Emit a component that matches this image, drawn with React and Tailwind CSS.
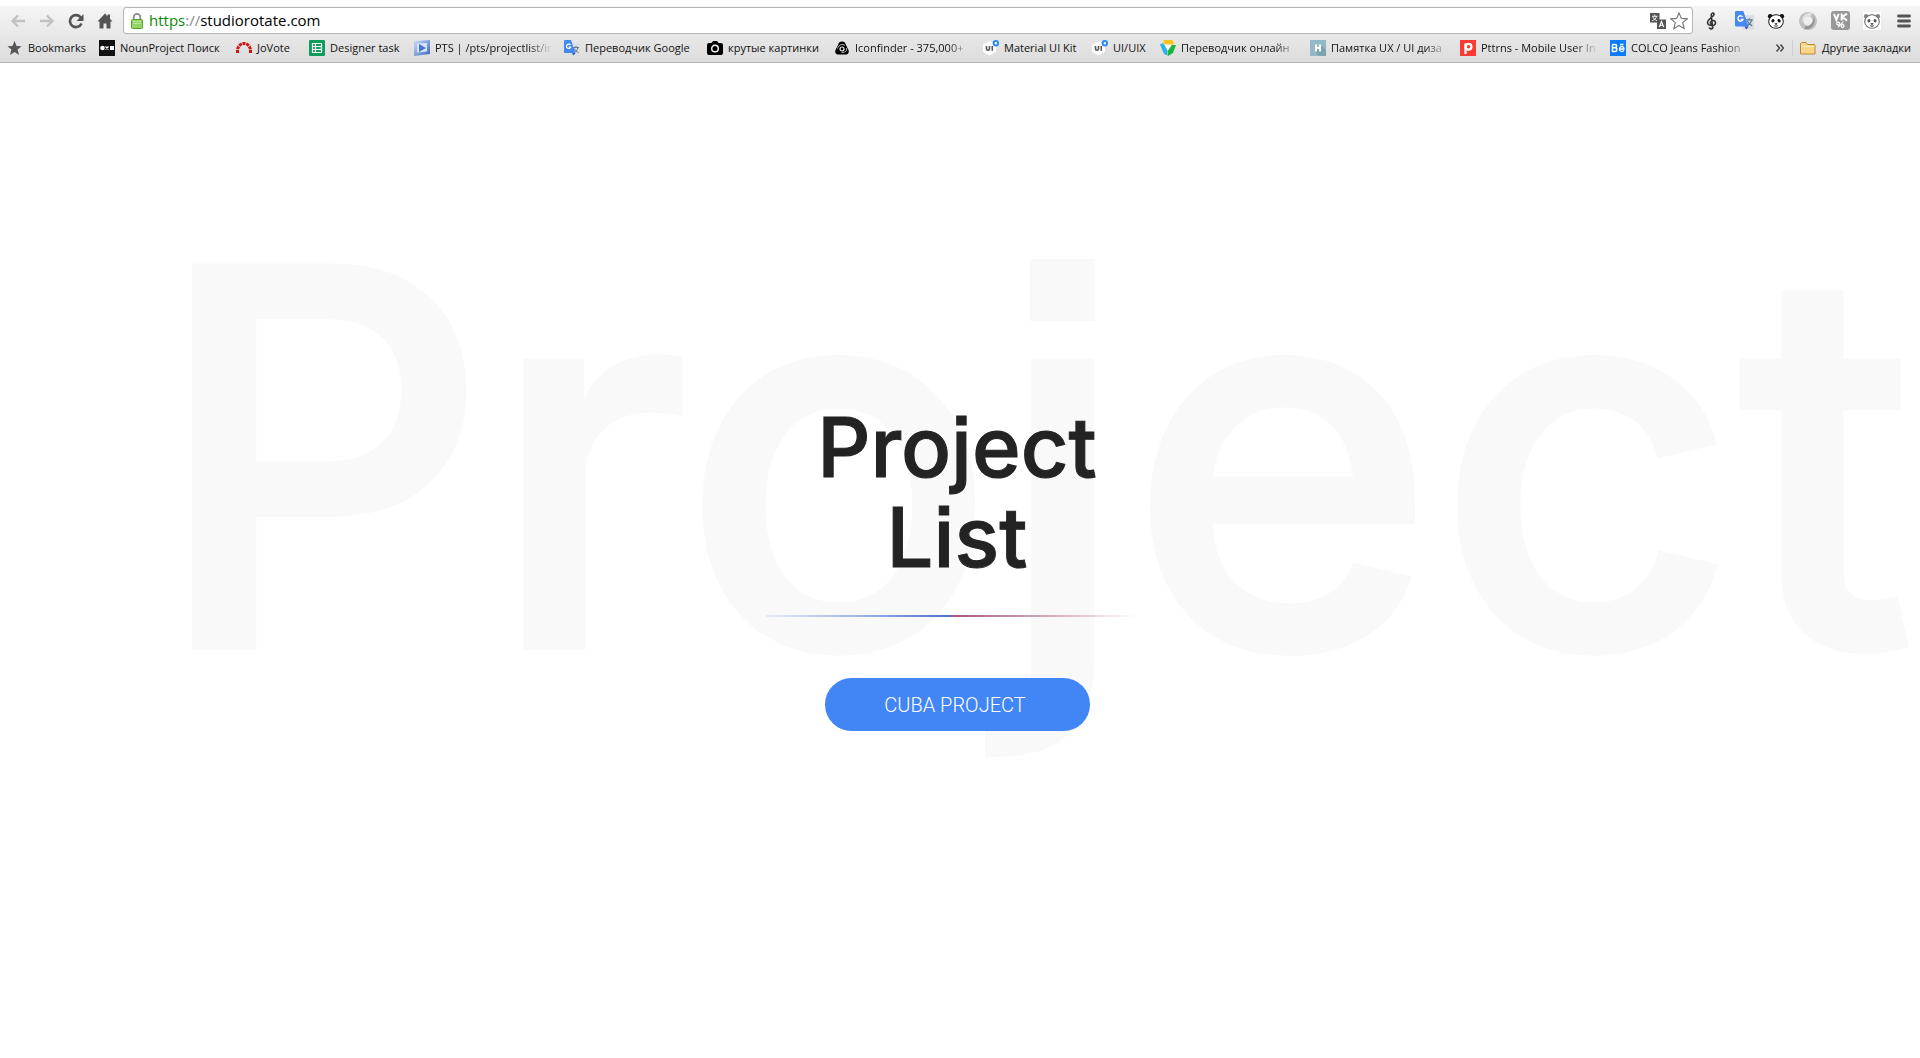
import React from "react";

const Svg = ({ children, size = 16, className = "" }) => (
  <svg width={size} height={size} viewBox="0 0 16 16" aria-hidden="true" className={"shrink-0 " + className}>
    {children}
  </svg>
);

/* Bookmark icons */
const StarIcon = () => (
  <Svg>
    <path d="M7.500 1l2 5 5 .3-3.900 3.300L12 15l-4.500-3L3 15l1.400-5.400L.5 6.300l5-.3z" fill="#555" />
  </Svg>
);
const NounIcon = () => (
  <Svg>
    <rect width="16" height="16" fill="#111" />
    <circle cx="3.500" cy="8" r="2.300" fill="#fff" />
    <path d="M6.500 6.500l3 3M9.500 6.500l-3 3" stroke="#fff" strokeWidth="1.300" />
    <rect x="11" y="6" width="4" height="4" fill="#fff" />
  </Svg>
);
const JoVoteIcon = () => (
  <Svg>
    <path d="M1.500 13V10.500A6.500 7 0 0 1 14.500 10.500V13" fill="none" stroke="#cf1414" strokeWidth="3" strokeDasharray="3 .8" />
  </Svg>
);
const SheetIcon = () => (
  <Svg>
    <rect width="16" height="16" rx="1" fill="#0f9d58" />
    <path d="M3.500 3.500h9v9h-9zM3.500 6.500h9M3.500 9.500h9M6.500 3.500v9" fill="none" stroke="#fff" strokeWidth="1.200" />
  </Svg>
);
const PtsIcon = () => (
  <Svg>
    <defs>
      <linearGradient id="pts" x1="0" y1="0" x2="1" y2="1">
        <stop offset="0" stopColor="#cfe0fa" />
        <stop offset="1" stopColor="#3765bd" />
      </linearGradient>
    </defs>
    <path d="M0 1l16-1v14l-16 2z" fill="url(#pts)" />
    <path d="M3 3.500l10-.5v8.500l-10 1z" fill="#d7e4f9" />
    <path d="M5 4l7 4-7 4z" fill="#4675d0" />
  </Svg>
);
const TranslateG = ({ size = 16 }) => (
  <Svg size={size}>
    <rect x="6" y="3.500" width="10" height="12" rx="1" fill="#d9dde0" />
    <path d="M9 7.500h6M12 6v1.500M14 7.500c-.5 2.500-2 4-4 5M10.500 8.500c.8 2 2 3.200 4 4" stroke="#5f7c8a" fill="none" />
    <path d="M1 0h6l4.500 13H1a1 1 0 0 1-1-1V1a1 1 0 0 1 1-1z" fill="#4688f1" />
    <path d="M8 13h3.500L9.500 15.500z" fill="#2f4fc0" />
    <path d="M6.500 5a2.200 2.200 0 1 0 .2 2.200H4.800" fill="none" stroke="#fff" strokeWidth="1.200" />
  </Svg>
);
const CameraIcon = () => (
  <Svg>
    <path d="M2 3h2.500L6 1h4l1.500 2H14a2 2 0 0 1 2 2v8a2 2 0 0 1-2 2H2a2 2 0 0 1-2-2V5a2 2 0 0 1 2-2z" />
    <circle cx="8" cy="8.500" r="3.300" fill="none" stroke="#fff" strokeWidth="1.400" />
  </Svg>
);
const IconfinderIcon = () => (
  <Svg>
    <path d="M8 1.500c2 0 3.500 1 4 3.500l2.500 5c1 2.500-.5 4.500-3 4.500h-7c-2.500 0-4-2-3-4.500l2.500-5c.5-2.500 2-3.500 4-3.500z" />
    <path d="M3.500 8.500C5 4.500 8.500 3.500 11 5.500M12.500 8c1 3-2 5-5 4.500" fill="none" stroke="#ddd" strokeWidth=".8" />
    <circle cx="8" cy="9" r="2" fill="none" stroke="#eee" strokeWidth="1.200" />
  </Svg>
);
const UiIcon = () => (
  <Svg>
    <path d="M6.500 1l6.500 3.700v7L6.500 15.500 0 11.700v-7z" fill="#fff" />
    <path d="M3.500 6v2.800a1.500 1.500 0 0 0 3 0V6M9.300 6v4.800" fill="none" stroke="#555" strokeWidth="1.600" />
    <circle cx="12.800" cy="3.200" r="2.200" fill="#fff" stroke="#2f8af0" strokeWidth="2" />
  </Svg>
);
const TriangleIcon = () => (
  <Svg>
    <path d="M3.500 0h9L14 4l-5 1.500L4 4z" fill="#f8c51c" />
    <path d="M0 4.500L3 3l4 6.500.5 6L4 14z" fill="#27b4e8" />
    <path d="M16 5l-3 8-5 3-.5-5L12 5z" fill="#18b43c" />
    <path d="M4.500 4.500h7l-3.500 6z" fill="#fff" />
  </Svg>
);
const HabrIcon = () => (
  <Svg>
    <rect width="16" height="16" fill="#92bac6" />
    <path d="M11 5l5 5v6H9l-4-4z" fill="#7da3af" />
    <path d="M6 4.500v7M10 4.500v7M6 8h4" stroke="#fff" strokeWidth="2" />
  </Svg>
);
const PttrnsIcon = () => (
  <Svg>
    <rect width="16" height="16" fill="#fb3b31" />
    <path d="M5.500 14V3.500" stroke="#fff" strokeWidth="2.300" />
    <circle cx="8.500" cy="6.800" r="2.900" fill="none" stroke="#fff" strokeWidth="2.200" />
  </Svg>
);
const BehanceIcon = () => (
  <Svg>
    <rect width="16" height="16" fill="#0a7cff" />
    <path d="M2.500 4.500h2.500a1.600 1.600 0 0 1 0 3.200H2.500M5 7.700a1.900 1.900 0 0 1 0 3.800H2.500V4.500" fill="none" stroke="#fff" strokeWidth="1.500" />
    <path d="M9.500 9h4.500c0-3.400-4.500-3.200-4.500 0 0 3.200 3.500 3 4.300 1.200M10 4.500h3.500" fill="none" stroke="#fff" strokeWidth="1.300" />
  </Svg>
);
const FolderIcon = () => (
  <Svg>
    <path d="M.5 14V3.500l1-1h4.500l1.500 2h7l.5.500v9z" fill="#fbd588" stroke="#b98a3c" />
    <path d="M1.500 6.500h13" stroke="#fff0c8" />
  </Svg>
);

/* Toolbar icons */
const BackIcon = () => (
  <Svg className="text-[#c2c2c2]">
    <path d="M15 8H2.500M8 2.500L2.500 8 8 13.500" fill="none" stroke="currentColor" strokeWidth="2.400" />
  </Svg>
);
const ForwardIcon = () => (
  <Svg className="text-[#c2c2c2]">
    <path d="M1 8h12.500M8 2.500L13.500 8 8 13.500" fill="none" stroke="currentColor" strokeWidth="2.400" />
  </Svg>
);
const ReloadIcon = () => (
  <Svg>
    <path d="M12.800 4.500A6 6 0 1 0 13.500 10.500" fill="none" stroke="#555" strokeWidth="2.600" />
    <path d="M15.500 1v7h-7z" fill="#555" />
  </Svg>
);
const HomeIcon = () => (
  <Svg>
    <path d="M8 .5L.5 8.500h2V15.500h4v-5h3v5h4V8.500h2L13 5.800V1.500h-2.500v1.700z" fill="#555" />
  </Svg>
);
const LockIcon = () => (
  <svg width="12" height="16" viewBox="0 0 12 16" aria-hidden="true" className="shrink-0">
    <path d="M2.700 7V4.200a3.300 3.300 0 0 1 6.600 0V7" fill="none" stroke="#8d8d8d" strokeWidth="1.800" />
    <rect x=".5" y="6.500" width="11" height="9" rx="1" fill="#93d364" stroke="#58a136" />
    <path d="M2 8.500h8M2 10.500h8" stroke="#b7e695" />
  </svg>
);
const PageTranslateIcon = () => (
  <Svg>
    <rect width="9.500" height="9.500" fill="#555" />
    <path d="M2 3.300h5.500M4.700 1.500v1.800M6.500 3.500C6 5.500 4.500 6.800 2.200 7.700M3 4c.8 2 2.300 3 4.200 3.700" stroke="#fff" strokeWidth=".9" fill="none" />
    <path d="M7 6.500h9V16H7z" fill="#555" />
    <path d="M9.300 14l2.200-5.500L13.700 14M10.200 12.300h2.600" fill="none" stroke="#fff" strokeWidth="1.100" />
  </Svg>
);
const StarOutline = () => (
  <Svg size={18}>
    <path d="M8 .8l2.100 4.900 5.200.4-4 3.400 1.300 5.300L8 12l-4.600 2.800 1.300-5.300-4-3.400 5.200-.4z" fill="#fff" stroke="#777" />
  </Svg>
);
const ClefIcon = () => (
  <svg width="12" height="18" viewBox="0 0 12 18" aria-hidden="true">
    <path d="M6.800 15.500L5.200 3.500C5 1.500 7.500-.2 8 2 8.300 4.800 1.800 6.500 1.500 10.500c0 3.500 7.500 4 8 .8.200-3.300-5-3.700-5.200-.6 0 .9.700 1.500 1.500 1.600" fill="none" stroke="#333" strokeWidth="1.500" />
    <path d="M6.800 15c0 2.400-3.500 2.400-3.300.3" fill="none" stroke="#333" strokeWidth="1.700" />
  </svg>
);
const PandaIcon = ({ light = false }) => (
  <Svg size={18} className={light ? "bg-white" : ""}>
    <circle cx="2.800" cy="3.800" r="2" fill={light ? "#888" : "#111"} />
    <circle cx="13.200" cy="3.800" r="2" fill={light ? "#888" : "#111"} />
    <ellipse cx="8" cy="8.500" rx="6.500" ry="6" fill="#fff" stroke={light ? "#666" : "#222"} strokeWidth=".9" />
    <ellipse cx="5.300" cy="7.800" rx="1.300" ry="1.600" transform="rotate(30 5.300 7.800)" fill={light ? "#555" : "#111"} />
    <ellipse cx="10.700" cy="7.800" rx="1.300" ry="1.600" transform="rotate(-30 10.700 7.800)" fill={light ? "#555" : "#111"} />
    <path d="M7 10.300h2l-1 1zM6.300 12.200q1.700 1 3.400 0" fill="#222" stroke="#333" strokeWidth=".6" />
  </Svg>
);
const RingIcon = () => (
  <Svg size={20}>
    <circle cx="8" cy="8" r="5.500" fill="none" stroke="#c0c0c0" strokeWidth="3.500" />
    <path d="M5 14.500A7 7 0 0 0 12 3.500c1.500 4-1.500 9-6 8.500z" fill="#959595" />
    <path d="M11 1.500A7 7 0 0 0 3.500 11C2.500 7 6 3.500 10 4.500z" fill="#e2e2e2" />
  </Svg>
);
const VkIcon = () => (
  <Svg size={19}>
    <rect width="16" height="16" rx="2.500" fill="#979797" />
    <path d="M2.500 2.500l2 5 2-5M9 2v6M13.500 2.200L9.500 5l4 3" fill="none" stroke="#fff" strokeWidth="1.700" />
    <path d="M10.500 9l-4.500 4.500" stroke="#fff" />
    <circle cx="6" cy="10.500" r="1.200" fill="none" stroke="#fff" />
    <circle cx="9.800" cy="12.700" r="1.200" fill="none" stroke="#fff" />
  </Svg>
);
const MenuIcon = () => (
  <Svg>
    <path d="M2.500 3h11M2.500 8h11M2.500 13h11" stroke="#555" strokeWidth="2.800" strokeLinecap="round" />
  </Svg>
);

const bookmarks = [
  { label: "Bookmarks", Icon: StarIcon, width: "w-[92px]" },
  { label: "NounProject Поиск", Icon: NounIcon, width: "w-[137px]" },
  { label: "JoVote", Icon: JoVoteIcon, width: "w-[73px]" },
  { label: "Designer task", Icon: SheetIcon, width: "w-[105px]" },
  { label: "PTS | /pts/projectlist/in", Icon: PtsIcon, width: "w-[150px]", cut: true },
  { label: "Переводчик Google", Icon: TranslateG, width: "w-[143px]" },
  { label: "крутые картинки", Icon: CameraIcon, width: "w-[127px]" },
  { label: "Iconfinder - 375,000+", Icon: IconfinderIcon, width: "w-[149px]", cut: true },
  { label: "Material UI Kit", Icon: UiIcon, width: "w-[109px]" },
  { label: "UI/UIX", Icon: UiIcon, width: "w-[68px]" },
  { label: "Переводчик онлайн", Icon: TriangleIcon, width: "w-[150px]", cut: true },
  { label: "Памятка UX / UI диза", Icon: HabrIcon, width: "w-[150px]", cut: true },
  { label: "Pttrns - Mobile User In", Icon: PttrnsIcon, width: "w-[150px]", cut: true },
  { label: "COLCO Jeans Fashion", Icon: BehanceIcon, width: "w-[150px]", cut: true },
];

const extensions = [
  { label: "Music", Icon: ClefIcon },
  { label: "Translate", Icon: () => <TranslateG size={19} /> },
  { label: "Panda", Icon: PandaIcon },
  { label: "Ring", Icon: RingIcon },
  { label: "VK", Icon: VkIcon },
  { label: "Panda light", Icon: () => <PandaIcon light /> },
  { label: "Menu", Icon: MenuIcon },
];

const NavButton = ({ label, children }) => (
  <button aria-label={label} className="flex h-6 w-[29px] shrink-0 items-center justify-center">
    {children}
  </button>
);

function Bookmark({ label, Icon, width, cut }) {
  return (
    <a href="#" className={"flex shrink-0 items-center gap-[5px] pr-3 whitespace-nowrap " + width}>
      <Icon />
      <span
        className={
          cut
            ? "min-w-0 flex-1 overflow-hidden [mask-image:linear-gradient(to_right,black_80%,transparent)]"
            : "min-w-0 flex-1"
        }
      >
        {label}
      </span>
    </a>
  );
}

function Browser() {
  return (
    <header className="border-b border-[#b6b6b6] bg-linear-to-b from-[#f8f8f8] to-[#dcdcdc] font-['Open_Sans',sans-serif] text-[#111]">
      <div className="h-[6px] bg-white" />
      <div className="flex items-center pt-px">
        <nav aria-label="Navigation" className="flex pl-[3px] pr-1">
          <NavButton label="Back"><BackIcon /></NavButton>
          <NavButton label="Forward"><ForwardIcon /></NavButton>
          <NavButton label="Reload"><ReloadIcon /></NavButton>
          <NavButton label="Home"><HomeIcon /></NavButton>
        </nav>
        <div className="flex h-[27px] min-w-0 flex-1 items-center rounded-[3px] border border-[#b4b4b4] bg-white pl-[7px] pr-1">
          <LockIcon />
          <a href="https://studiorotate.com" className="ml-[6px] flex-1 pb-[2px] text-[15px] leading-5 text-black">
            <span className="text-[#0b8a0b]">https</span>
            <span className="text-[#888]">://</span>studiorotate.com
          </a>
          <button aria-label="Translate page" className="mr-1"><PageTranslateIcon /></button>
          <button aria-label="Add bookmark"><StarOutline /></button>
        </div>
        <div className="flex pl-[3px]">
          {extensions.map(({ label, Icon }) => (
            <button key={label} aria-label={label} className="flex h-6 w-8 items-center justify-center">
              <Icon />
            </button>
          ))}
        </div>
      </div>
      <div className="flex h-7 items-center pl-[7px] pr-2 text-[11px] leading-4">
        <nav aria-label="Bookmarks" className="flex min-w-0 flex-1 overflow-hidden">
          {bookmarks.map((b) => (
            <Bookmark key={b.label} {...b} />
          ))}
        </nav>
        <button aria-label="More bookmarks" className="mr-2">
          <svg width="8" height="8" viewBox="0 0 8 8" aria-hidden="true">
            <path d="M.5 .5L3.500 4 .5 7.500M4.500 .5L7.500 4 4.500 7.500" fill="none" stroke="#444" strokeWidth="1.500" />
          </svg>
        </button>
        <button className="flex items-center gap-[6px] border-l border-[#c9d0d6] pl-[7px] pr-px">
          <FolderIcon />
          Другие закладки
        </button>
      </div>
    </header>
  );
}

export default function App() {
  return (
    <div className="flex min-h-screen flex-col bg-white">
      <Browser />
      <main className="grid flex-1 grid-cols-1 content-start overflow-hidden font-['Inter','Liberation_Sans',sans-serif] font-medium [font-feature-settings:'ss07']">
        <p
          aria-hidden="true"
          className="col-start-1 row-start-1 mt-[132px] pl-[153px] text-[523px] leading-[524px] whitespace-nowrap text-[#f9f9f9] select-none [-webkit-text-stroke:6px_#f9f9f9]"
        >
          Project
        </p>
        <section className="z-10 col-start-1 row-start-1 flex flex-col items-center pt-[339px]">
          <h1 className="mr-[6px] text-center text-[83px] leading-[90px] text-[#232323] [-webkit-text-stroke:1px_#232323]">
            Project
            <br />
            List
          </h1>
          <div className="mt-[33px] mr-[18px] flex h-[2px] w-[370px]">
            <span className="flex-1 bg-linear-to-r from-[#4a6fd0]/10 via-[#4a6fd0]/50 to-[#4a6fd0]" />
            <span className="flex-1 bg-linear-to-r from-[#a8527c] via-[#a8527c]/50 to-[#a8527c]/0" />
          </div>
          <button className="mt-[61px] mr-[6px] h-[53px] w-[265px] rounded-full bg-[#4285f4] pr-1 font-['Roboto',sans-serif] text-[20px] font-light text-white">
            CUBA PROJECT
          </button>
        </section>
      </main>
    </div>
  );
}
